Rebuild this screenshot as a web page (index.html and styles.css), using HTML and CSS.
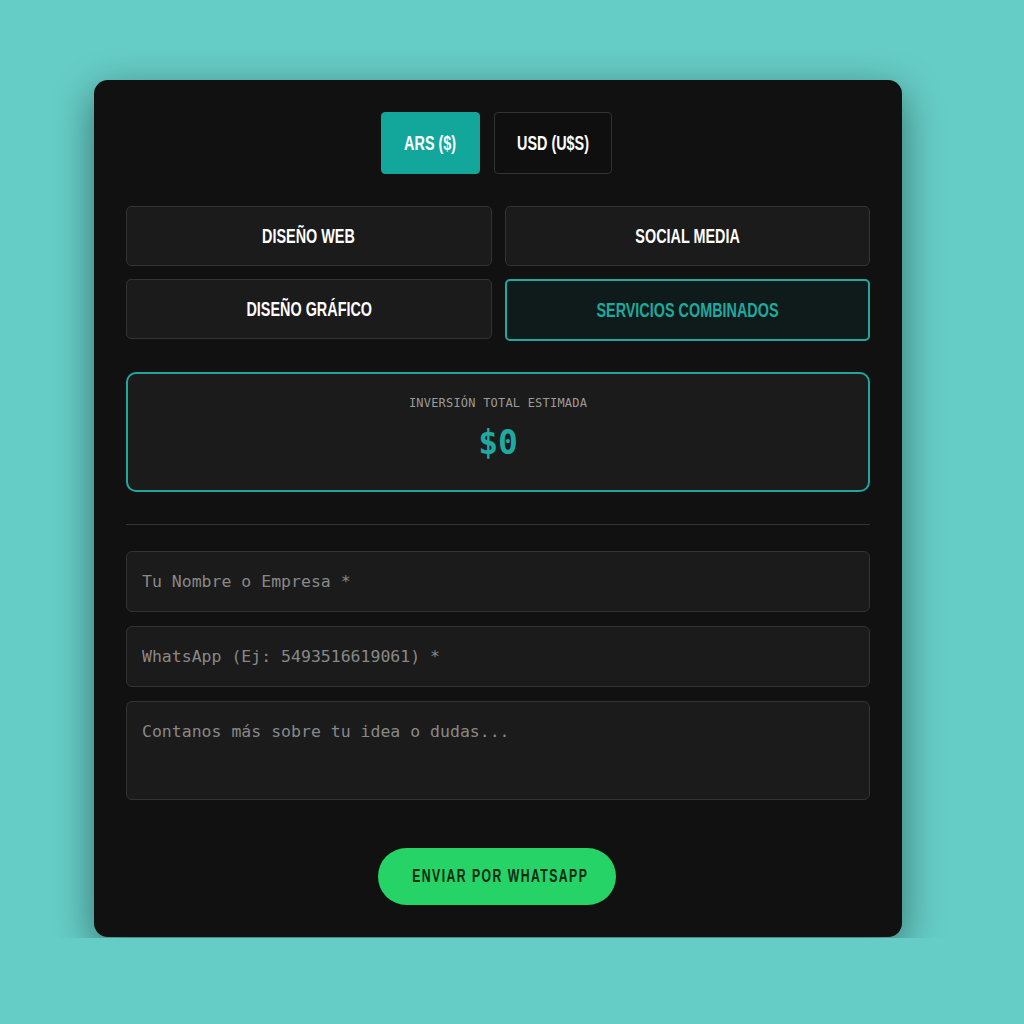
FILE: index.html
```html
<!DOCTYPE html>
<html lang="es">
<head>
    <meta charset="UTF-8">
    <meta name="viewport" content="width=device-width, initial-scale=1.0">
    <title>Cotizador</title>
    <link rel="stylesheet" href="styles.css">
</head>
<body>
  <div class="stage">
    <div class="card">
        <div class="currency">
            <button class="cur ars active"><span class="t">ARS ($)</span></button>
            <button class="cur usd"><span class="t">USD (U$S)</span></button>
        </div>

        <div class="services">
            <button class="service"><span class="t">DISEÑO WEB</span></button>
            <button class="service"><span class="t">SOCIAL MEDIA</span></button>
            <button class="service"><span class="t">DISEÑO GRÁFICO</span></button>
            <button class="service selected"><span class="t">SERVICIOS COMBINADOS</span></button>
        </div>

        <div class="total">
            <p class="total-label">INVERSIÓN TOTAL ESTIMADA</p>
            <p class="total-amount">$0</p>
        </div>

        <hr class="divider">

        <form class="contact">
            <input type="text" placeholder="Tu Nombre o Empresa *">
            <input type="text" placeholder="WhatsApp (Ej: 5493516619061) *">
            <textarea placeholder="Contanos más sobre tu idea o dudas..."></textarea>
            <button type="submit" class="send"><span class="t">ENVIAR POR WHATSAPP</span></button>
        </form>
    </div>
  </div>
</body>
</html>
```

FILE: styles.css
```css
html {
    background: #66cdc6;
}

body {
    margin: 0;
    background: #66cdc6;
    font-family: "DejaVu Sans Mono", monospace;
}

.stage {
    height: 938px;
    overflow: hidden;
    padding: 80px 0 0 94px;
    box-sizing: border-box;
}

.card {
    width: 808px;
    height: 857px;
    box-sizing: border-box;
    background: #111111;
    border-radius: 14px;
    padding: 32px;
    box-shadow: 0 12px 40px rgba(0, 0, 0, 0.45);
    display: flex;
    flex-direction: column;
}

button {
    font-family: "Liberation Sans", Arial, sans-serif;
    font-weight: bold;
    font-size: 20px;
    padding: 0;
    cursor: pointer;
}

/* no condensed face installed, so squeeze the bold sans */
button .t {
    display: inline-block;
    white-space: nowrap;
    transform: scale(0.72, 1.05);
}

.currency {
    display: flex;
    justify-content: center;
    gap: 14px;
    margin-left: -3px;
}

.cur {
    height: 62px;
    color: #ffffff;
    background: #0f0f0f;
    border: 1px solid #333333;
    border-radius: 4px;
}

.cur.ars {
    width: 99px;
}

.cur.usd {
    width: 118px;
}

.cur.active {
    background: #13a79c;
    border-color: #13a79c;
}

.services {
    margin-top: 32px;
    display: grid;
    grid-template-columns: 1fr 1fr;
    gap: 13px;
}

.service {
    height: 60px;
    color: #ffffff;
    background: #1b1b1b;
    border: 1px solid #333333;
    border-radius: 5px;
}

.service.selected {
    height: 62px;
    color: #1fa89b;
    background: #0f1b1b;
    border: 2px solid #1fa89b;
}

.total {
    margin-top: 31px;
    height: 123px;
    box-sizing: border-box;
    background: #1b1b1b;
    border: 2px solid #1fa79b;
    border-radius: 10px;
    display: flex;
    flex-direction: column;
    align-items: center;
    padding-top: 22px;
}

.total-label {
    margin: 0;
    font-size: 12px;
    color: #9a9a9a;
    letter-spacing: 0.2px;
}

.total-amount {
    margin: 13px 0 0;
    font-size: 33px;
    font-weight: bold;
    color: #1eaaa0;
}

.divider {
    margin: 32px 0 0;
    border: none;
    border-top: 1px solid #333333;
}

.contact {
    margin-top: 26px;
    display: flex;
    flex-direction: column;
    gap: 14px;
}

.contact input,
.contact textarea {
    box-sizing: border-box;
    width: 100%;
    background: #1b1b1b;
    border: 1px solid #333333;
    border-radius: 6px;
    padding: 0 15px;
    font-family: "DejaVu Sans Mono", monospace;
    font-size: 16.5px;
    color: #dddddd;
}

.contact input {
    height: 61px;
}

.contact textarea {
    height: 99px;
    padding-top: 20px;
    resize: none;
}

.contact ::placeholder {
    color: #888888;
}

.send {
    align-self: center;
    margin-top: 34px;
    margin-left: -3px;
    width: 238px;
    height: 57px;
    border: none;
    border-radius: 30px;
    background: #25d366;
    color: #0b2a12;
    font-size: 17px;
    letter-spacing: 2px;
}

.send .t {
    transform: scale(0.72, 1.05);
}
```
